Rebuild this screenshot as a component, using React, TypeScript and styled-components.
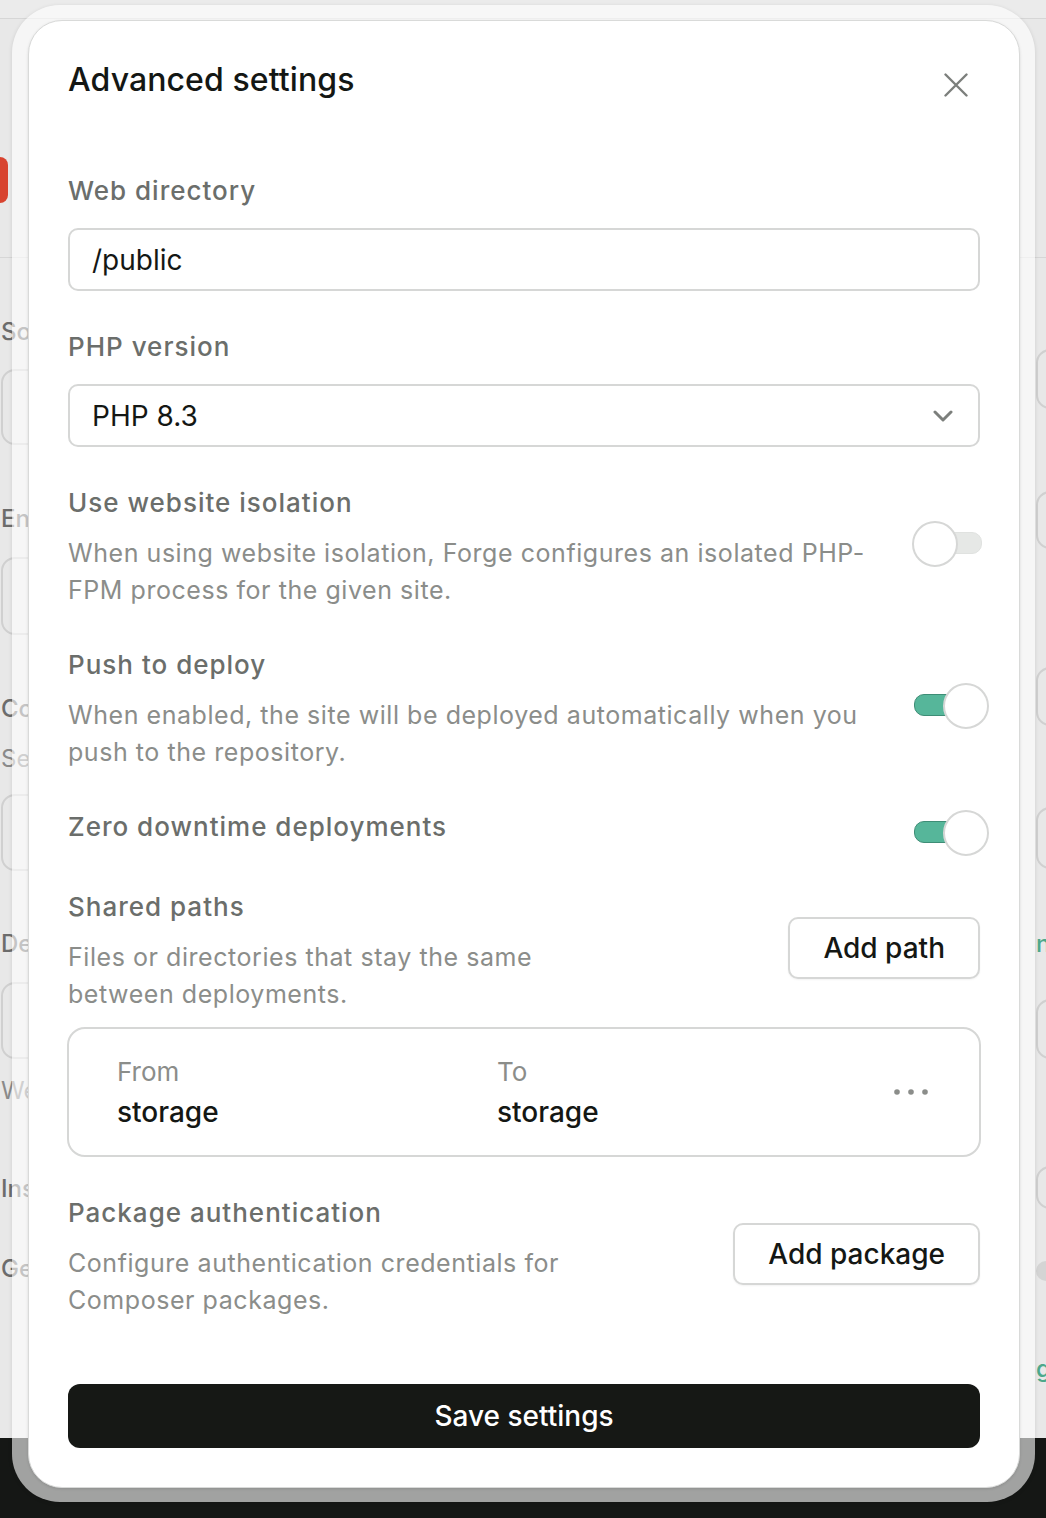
import styled, { createGlobalStyle } from "styled-components";

const GlobalStyle = createGlobalStyle`
  html, body {
    margin: 0;
    padding: 0;
  }
  body {
    font-family: Inter, "Noto Sans", sans-serif;
    background: #e8e8e8;
    color: #141714;
  }
  * {
    box-sizing: border-box;
  }
`;

/* ---------- page behind the dialog ---------- */

const Backdrop = styled.div`
  position: relative;
  width: 100%;
  height: 1518px;
  overflow: hidden;
  background: #e8e8e8;
  display: flex;
  flex-direction: column;
`;

const TopStrip = styled.div`
  height: 19px;
  border-bottom: 1px solid #d6d6d6;
  background: #ebebeb;
`;

const Hero = styled.div`
  height: 239px;
  border-bottom: 1px solid #d6d6d6;
  padding-top: 138px;
`;

const RedBadge = styled.div`
  width: 40px;
  height: 46px;
  margin-left: -32px;
  border-radius: 8px;
  background: #d8432f;
`;

const BgColumns = styled.div`
  display: flex;
  justify-content: space-between;
  margin-right: -289px;
`;

const BgColumn = styled.div<{ $width: number }>`
  width: ${(p) => p.$width}px;
  display: flex;
  flex-direction: column;
  padding-left: 1px;
`;

const BgLabel = styled.div<{ $mt: number; $muted?: boolean; $teal?: boolean }>`
  margin-top: ${(p) => p.$mt}px;
  font-size: 24px;
  line-height: 30px;
  font-weight: ${(p) => (p.$muted ? 400 : 500)};
  color: ${(p) => (p.$teal ? "#4da88b" : p.$muted ? "#8a8a8a" : "#6c6c6c")};
  white-space: nowrap;
`;

const BgBox = styled.div<{ $mt: number; $h: number }>`
  margin-top: ${(p) => p.$mt}px;
  height: ${(p) => p.$h}px;
  border: 2px solid #d0d0d0;
  border-radius: 14px;
`;

const BgPill = styled.div<{ $mt: number }>`
  margin-top: ${(p) => p.$mt}px;
  height: 20px;
  border-radius: 10px;
  background: #d4d4d4;
`;

const DarkFooter = styled.div`
  margin-top: auto;
  height: 80px;
  background: #151715;
`;

/* ---------- dialog ---------- */

const Frame = styled.div`
  position: absolute;
  left: 12px;
  top: 5px;
  width: 1023px;
  padding: 15px 15px 14px 16px;
  border-radius: 48px;
  background: rgba(255, 255, 255, 0.6);
  box-shadow: 0 1px 4px rgba(0, 0, 0, 0.12);
`;

const Modal = styled.div`
  background: #fff;
  border: 1px solid #d9dad9;
  border-radius: 34px;
  padding: 39px;
  display: flex;
  flex-direction: column;
  box-shadow: 0 1px 3px rgba(0, 0, 0, 0.12);
`;

const Header = styled.div`
  height: 40px;
  display: flex;
  align-items: center;
  justify-content: space-between;
`;

const Title = styled.h2`
  margin: 0;
  font-size: 32px;
  line-height: 40px;
  font-weight: 500;
  letter-spacing: 0.1px;
  color: #141714;
`;

const CloseButton = styled.button`
  width: 48px;
  height: 48px;
  margin-top: 10px;
  padding: 0;
  border: 0;
  background: none;
  display: flex;
  align-items: center;
  justify-content: center;
  color: #7c7f7c;
`;

const Body = styled.div`
  margin-top: 73px;
  display: flex;
  flex-direction: column;
  gap: 38px;
`;

const Field = styled.div`
  display: flex;
  flex-direction: column;
`;

const Label = styled.div`
  font-size: 26px;
  line-height: 36px;
  font-weight: 500;
  letter-spacing: 1px;
  color: #6b6e6b;
  white-space: nowrap;
`;

const Control = styled.div`
  margin-top: 19px;
  height: 63px;
  border: 2px solid #d6d7d6;
  border-radius: 10px;
  padding: 0 25px 0 22px;
  display: flex;
  align-items: center;
  justify-content: space-between;
  font-size: 28px;
  color: #141714;
`;

const Row = styled.div<{ $top?: boolean }>`
  display: flex;
  align-items: ${(p) => (p.$top ? "flex-start" : "center")};
  justify-content: space-between;
  gap: 24px;
`;

const TextBlock = styled.div`
  display: flex;
  flex-direction: column;
`;

const Hint = styled.p`
  margin: 14px 0 0;
  font-size: 25px;
  line-height: 37px;
  letter-spacing: 0.55px;
  color: #8b8d8a;
  white-space: nowrap;
`;

const Switch = styled.button<{ $on: boolean; $lift?: boolean }>`
  position: relative;
  flex-shrink: 0;
  width: 74px;
  height: 42px;
  margin-right: -6px;
  margin-top: ${(p) => (p.$lift ? "0" : "1px")};
  margin-bottom: ${(p) => (p.$lift ? "10px" : "-1px")};
  padding: 0;
  border: 0;
  background: none;

  &::before {
    content: "";
    position: absolute;
    left: 2px;
    right: 4px;
    top: 11px;
    height: 20px;
    border-radius: 10px;
    background: ${(p) => (p.$on ? "#56b69a" : "#e6e8e6")};
    border: 1.5px solid ${(p) => (p.$on ? "#3e8d76" : "#e0e2e0")};
  }

  &::after {
    content: "";
    position: absolute;
    top: 0;
    left: ${(p) => (p.$on ? "31px" : "0")};
    width: 42px;
    height: 42px;
    border-radius: 50%;
    background: #fff;
    border: 2px solid #d6d7d6;
  }
`;

const OutlineButton = styled.button`
  flex-shrink: 0;
  height: 62px;
  margin-bottom: 6px;
  padding: 0 33px;
  border: 2px solid #d6d7d6;
  border-radius: 10px;
  background: #fff;
  box-shadow: 0 1px 2px rgba(0, 0, 0, 0.05);
  font-family: inherit;
  font-size: 28px;
  font-weight: 500;
  color: #141714;
`;

const PathCard = styled.div`
  margin: 14px -1px 0;
  border: 2px solid #d6d7d6;
  border-radius: 18px;
  padding: 25px 51px 25px 48px;
  display: grid;
  grid-template-columns: 380px 1fr auto;
  align-items: center;
`;

const PathCell = styled.div`
  display: flex;
  flex-direction: column;
  gap: 4px;
`;

const PathCaption = styled.div`
  font-size: 26px;
  line-height: 36px;
  color: #8b8d8a;
`;

const PathValue = styled.div`
  font-size: 28px;
  line-height: 36px;
  font-weight: 500;
  color: #141714;
`;

const MenuDots = styled.button`
  padding: 0;
  border: 0;
  background: none;
  display: flex;
  color: #8b8d8a;
`;

const SaveButton = styled.button`
  margin-top: 65px;
  height: 64px;
  border: 0;
  border-radius: 12px;
  background: #161815;
  color: #fff;
  font-family: inherit;
  font-size: 28px;
  font-weight: 500;
`;

const App = () => {
  return (
    <>
      <GlobalStyle />
      <Backdrop>
        <TopStrip />
        <Hero>
          <RedBadge />
        </Hero>
        <BgColumns>
          <BgColumn $width={400}>
            <BgLabel $mt={59}>Source control</BgLabel>
            <BgBox $mt={22} $h={76} />
            <BgLabel $mt={59}>Environment</BgLabel>
            <BgBox $mt={23} $h={78} />
            <BgLabel $mt={59}>Composer</BgLabel>
            <BgLabel $mt={20} $muted>Select a branch</BgLabel>
            <BgBox $mt={20} $h={77} />
            <BgLabel $mt={58}>Deploy script</BgLabel>
            <BgBox $mt={23} $h={77} />
            <BgLabel $mt={17} $muted>Webhook</BgLabel>
            <BgLabel $mt={68}>Install</BgLabel>
            <BgLabel $mt={50}>General</BgLabel>
          </BgColumn>
          <BgColumn $width={300}>
            <BgBox $mt={91} $h={60} />
            <BgBox $mt={82} $h={58} />
            <BgBox $mt={118} $h={59} />
            <BgBox $mt={81} $h={62} />
            <BgLabel $mt={60} $teal>nable</BgLabel>
            <BgBox $mt={40} $h={60} />
            <BgBox $mt={107} $h={43} />
            <BgPill $mt={52} />
            <BgLabel $mt={73} $teal>gs</BgLabel>
          </BgColumn>
        </BgColumns>
        <DarkFooter />

        <Frame>
          <Modal>
            <Header>
              <Title>Advanced settings</Title>
              <CloseButton aria-label="Close">
                <svg width="24" height="24" viewBox="0 0 24 24" fill="none">
                  <path
                    d="M1.5 1.5L22.5 22.5M22.5 1.5L1.5 22.5"
                    stroke="currentColor"
                    strokeWidth="2.4"
                    strokeLinecap="round"
                  />
                </svg>
              </CloseButton>
            </Header>

            <Body>
              <Field>
                <Label>Web directory</Label>
                <Control>/public</Control>
              </Field>

              <Field>
                <Label>PHP version</Label>
                <Control>
                  PHP 8.3
                  <svg width="20" height="12" viewBox="0 0 20 12" fill="none">
                    <path
                      d="M2 2L10 10L18 2"
                      stroke="#7c7f7c"
                      strokeWidth="3"
                      strokeLinecap="round"
                      strokeLinejoin="round"
                    />
                  </svg>
                </Control>
              </Field>

              <Row>
                <TextBlock>
                  <Label>Use website isolation</Label>
                  <Hint>
                    When using website isolation, Forge configures an isolated PHP-
                    <br />
                    FPM process for the given site.
                  </Hint>
                </TextBlock>
                <Switch $on={false} $lift aria-label="Use website isolation" />
              </Row>

              <Row>
                <TextBlock>
                  <Label>Push to deploy</Label>
                  <Hint>
                    When enabled, the site will be deployed automatically when you
                    <br />
                    push to the repository.
                  </Hint>
                </TextBlock>
                <Switch $on $lift aria-label="Push to deploy" />
              </Row>

              <Row $top>
                <Label>Zero downtime deployments</Label>
                <Switch $on aria-label="Zero downtime deployments" />
              </Row>

              <Field>
                <Row>
                  <TextBlock>
                    <Label>Shared paths</Label>
                    <Hint>
                      Files or directories that stay the same
                      <br />
                      between deployments.
                    </Hint>
                  </TextBlock>
                  <OutlineButton>Add path</OutlineButton>
                </Row>
                <PathCard>
                  <PathCell>
                    <PathCaption>From</PathCaption>
                    <PathValue>storage</PathValue>
                  </PathCell>
                  <PathCell>
                    <PathCaption>To</PathCaption>
                    <PathValue>storage</PathValue>
                  </PathCell>
                  <MenuDots aria-label="More">
                    <svg width="34" height="8" viewBox="0 0 34 8" fill="currentColor">
                      <circle cx="3" cy="4" r="2.8" />
                      <circle cx="17" cy="4" r="2.8" />
                      <circle cx="31" cy="4" r="2.8" />
                    </svg>
                  </MenuDots>
                </PathCard>
              </Field>

              <Row>
                <TextBlock>
                  <Label>Package authentication</Label>
                  <Hint>
                    Configure authentication credentials for
                    <br />
                    Composer packages.
                  </Hint>
                </TextBlock>
                <OutlineButton>Add package</OutlineButton>
              </Row>
            </Body>

            <SaveButton>Save settings</SaveButton>
          </Modal>
        </Frame>
      </Backdrop>
    </>
  );
};

export default App;
